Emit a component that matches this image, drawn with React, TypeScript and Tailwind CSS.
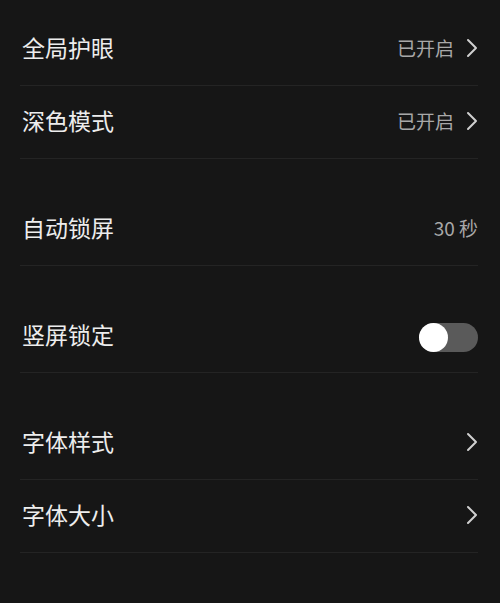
import React from "react";

const Chevron = () => (
  <svg width="12" height="20" viewBox="0 0 12 20" fill="none" className="ml-[12px]">
    <path d="M2 2 L10 10 L2 18" stroke="#d0d0d0" strokeWidth="2" strokeLinecap="round" strokeLinejoin="round" />
  </svg>
);

const Row = ({ label, right }: { label: string; right?: React.ReactNode }) => (
  <div className="h-[73px] flex items-center justify-between border-b border-[#242424] ml-[20px] mr-[22px] pl-[2px] pb-[3px]">
    <span className="text-[23px] text-[#ededed] leading-none">{label}</span>
    <div className="flex items-center">{right}</div>
  </div>
);

const Value = ({ t }: { t: string }) => (
  <span className="text-[19px] text-[#a8a8a8] leading-none">{t}</span>
);

export default function App() {
  return (
    <div
      className="w-[500px] h-[603px] bg-[#161616] pt-[13px] overflow-hidden"
      style={{ fontFamily: '"Noto Sans CJK SC", "Noto Sans", sans-serif' }}
    >
      <Row label="全局护眼" right={<><Value t="已开启" /><Chevron /></>} />
      <Row label="深色模式" right={<><Value t="已开启" /><Chevron /></>} />
      <div className="h-[34px]" />
      <Row label="自动锁屏" right={<Value t="30 秒" />} />
      <div className="h-[34px]" />
      <Row
        label="竖屏锁定"
        right={
          <div className="w-[59px] h-[29px] mt-[6px] rounded-full bg-[#5a5a5a] flex items-center">
            <div className="w-[29px] h-[29px] rounded-full bg-white" />
          </div>
        }
      />
      <div className="h-[34px]" />
      <Row label="字体样式" right={<Chevron />} />
      <Row label="字体大小" right={<Chevron />} />
    </div>
  );
}
